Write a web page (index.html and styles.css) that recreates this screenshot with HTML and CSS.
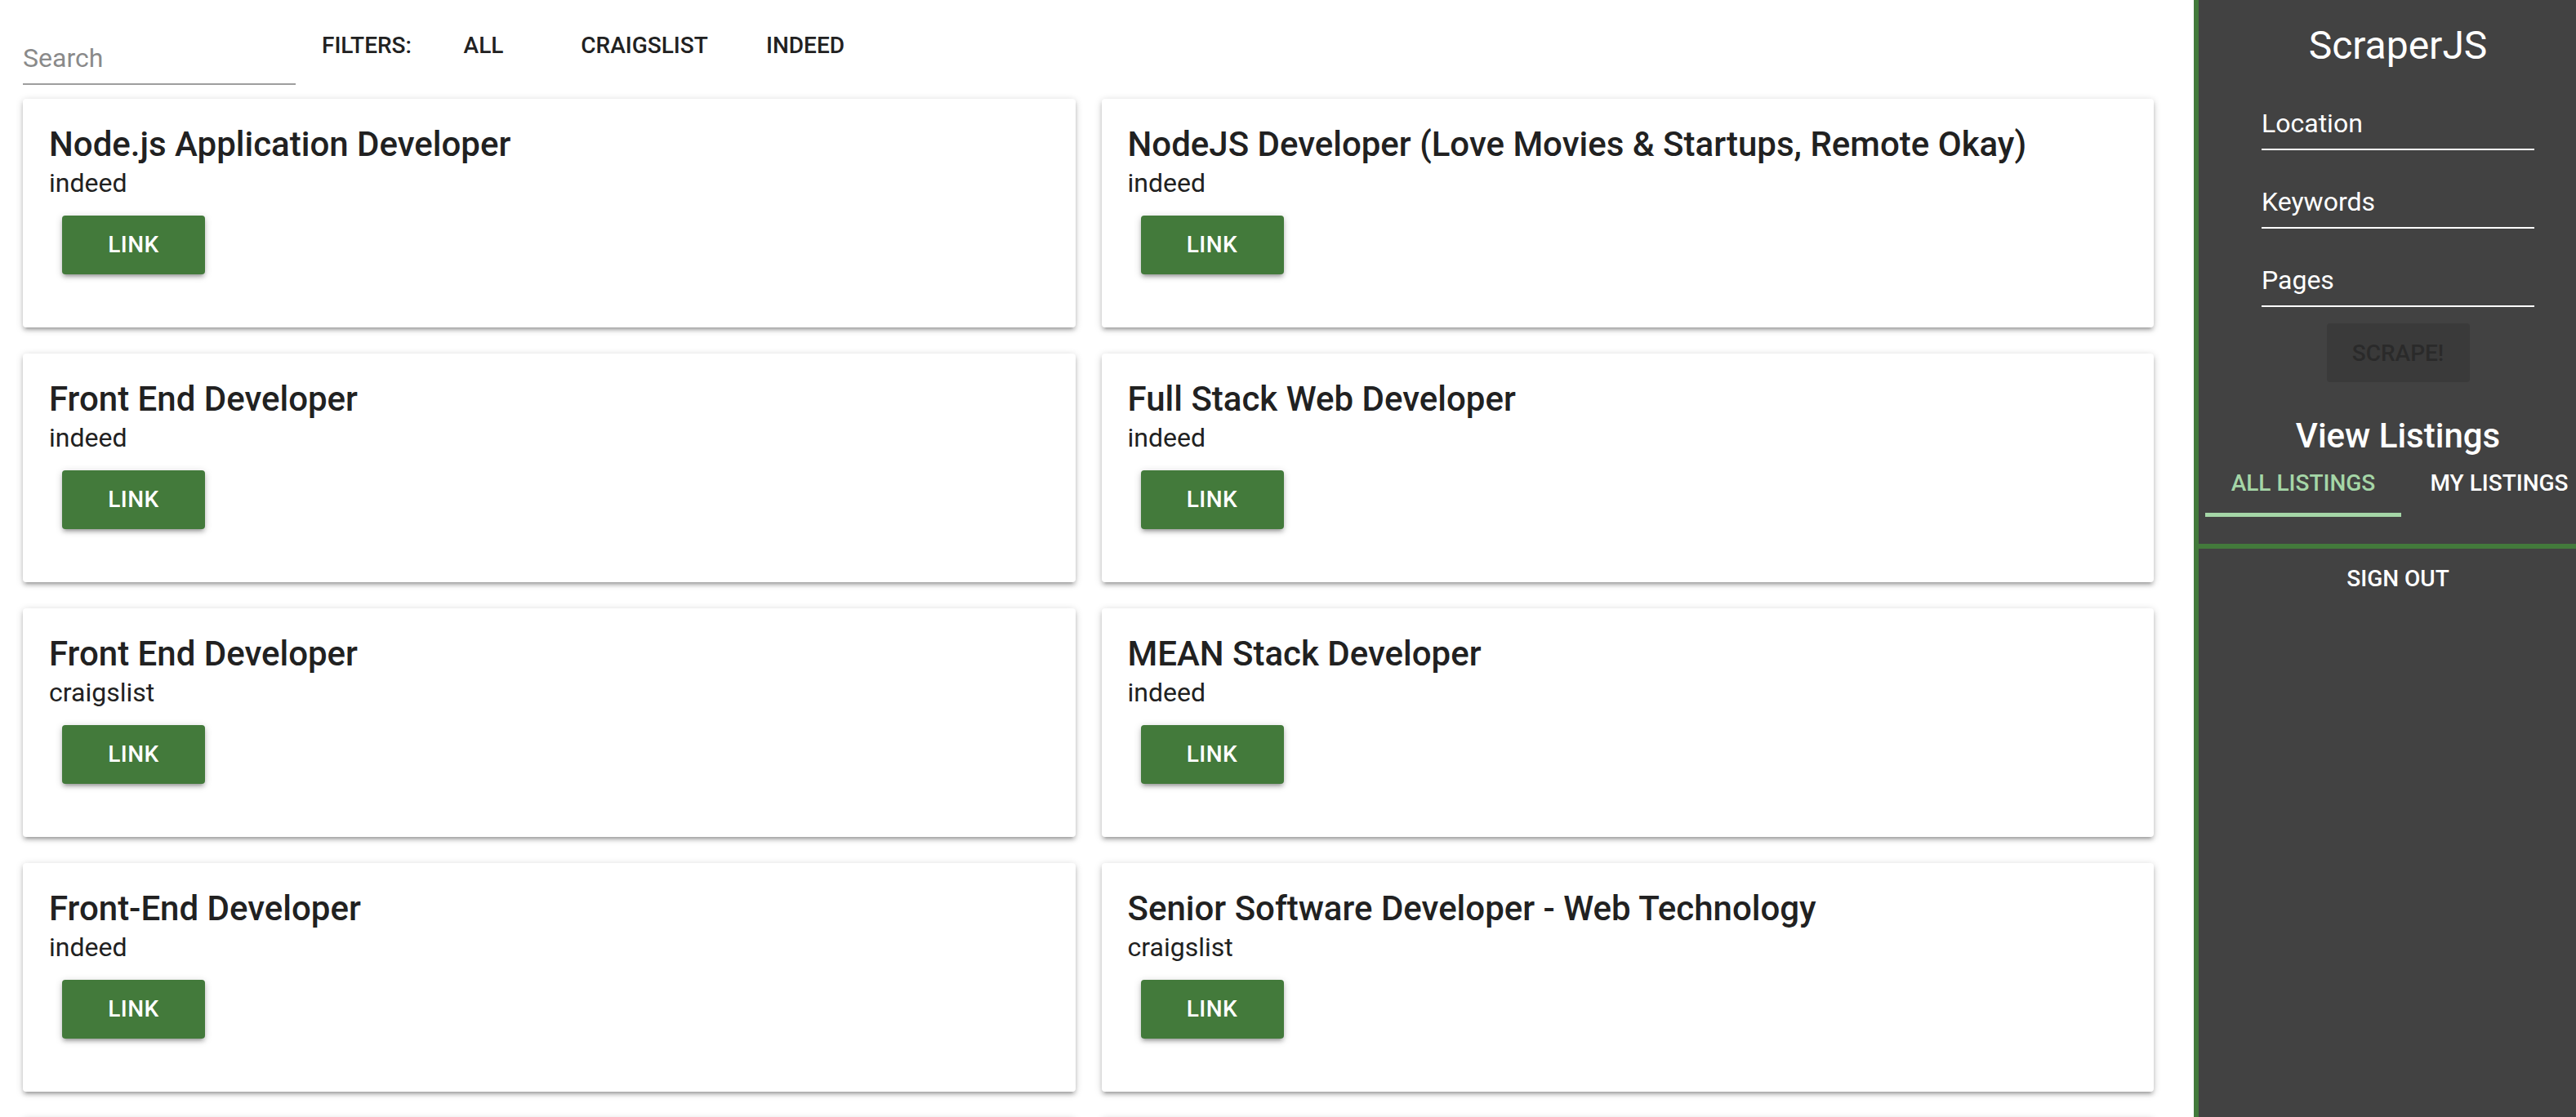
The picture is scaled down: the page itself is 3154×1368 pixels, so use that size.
FILE: index.html
```html
<!DOCTYPE html>
<html lang="en">
<head>
<meta charset="utf-8">
<title>ScraperJS</title>
<link rel="stylesheet" href="styles.css">
</head>
<body>
<div class="app">
  <main class="main">
    <div class="toolbar">
      <input class="search" type="text" placeholder="Search">
      <div class="filters">
        <span class="filter-label">FILTERS:</span>
        <button class="filter-btn">ALL</button>
        <button class="filter-btn">CRAIGSLIST</button>
        <button class="filter-btn">INDEED</button>
      </div>
    </div>
    <div class="grid">
      <div class="card">
        <div class="card-title">Node.js Application Developer</div>
        <p class="card-source">indeed</p>
        <a class="btn-link">LINK</a>
      </div>
      <div class="card">
        <div class="card-title">NodeJS Developer (Love Movies &amp; Startups, Remote Okay)</div>
        <p class="card-source">indeed</p>
        <a class="btn-link">LINK</a>
      </div>
      <div class="card">
        <div class="card-title">Front End Developer</div>
        <p class="card-source">indeed</p>
        <a class="btn-link">LINK</a>
      </div>
      <div class="card">
        <div class="card-title">Full Stack Web Developer</div>
        <p class="card-source">indeed</p>
        <a class="btn-link">LINK</a>
      </div>
      <div class="card">
        <div class="card-title">Front End Developer</div>
        <p class="card-source">craigslist</p>
        <a class="btn-link">LINK</a>
      </div>
      <div class="card">
        <div class="card-title">MEAN Stack Developer</div>
        <p class="card-source">indeed</p>
        <a class="btn-link">LINK</a>
      </div>
      <div class="card">
        <div class="card-title">Front-End Developer</div>
        <p class="card-source">indeed</p>
        <a class="btn-link">LINK</a>
      </div>
      <div class="card">
        <div class="card-title">Senior Software Developer - Web Technology</div>
        <p class="card-source">craigslist</p>
        <a class="btn-link">LINK</a>
      </div>
      <div class="card card-empty"></div>
      <div class="card card-empty"></div>
    </div>
  </main>
  <aside class="side">
    <div class="side-inner">
      <h1 class="brand">ScraperJS</h1>
      <div class="field">Location</div>
      <div class="field">Keywords</div>
      <div class="field">Pages</div>
      <div class="scrape-row"><button class="btn-scrape" disabled>SCRAPE!</button></div>
      <h2 class="view-title">View Listings</h2>
      <div class="tabs">
        <a class="tab active">ALL LISTINGS</a>
        <a class="tab">MY LISTINGS</a>
      </div>
      <div class="divider"></div>
      <a class="signout">SIGN OUT</a>
    </div>
  </aside>
</div>
</body>
</html>
```
FILE: styles.css
```css
html, body {
  margin: 0;
  padding: 0;
  height: 100%;
  overflow: hidden;
}
body {
  font-family: Roboto, "Noto Sans", sans-serif;
  color: rgba(0, 0, 0, 0.87);
  background: #fff;
}
.app {
  display: flex;
  height: 100vh;
}
.main {
  width: 2686px;
  flex: none;
  box-sizing: border-box;
  padding: 0 49px 0 28px;
}
.toolbar {
  display: flex;
  align-items: flex-start;
  height: 121px;
}
.search {
  margin-top: 40px;
  width: 334px;
  height: 62px;
  box-sizing: content-box;
  padding: 0;
  border: none;
  border-bottom: 2px solid #9e9e9e;
  outline: none;
  font-family: Roboto, sans-serif;
  font-size: 32px;
  color: #212121;
  background: transparent;
}
.search::placeholder {
  color: #8a8a8a;
}
.filters {
  display: flex;
  align-items: center;
  margin-left: 32px;
  margin-top: 36px;
  height: 40px;
}
.filter-label {
  width: 108px;
  font-size: 28px;
  font-weight: 500;
  line-height: 40px;
  color: #212121;
}
.filter-btn {
  width: 180px;
  height: 40px;
  padding: 0;
  border: none;
  background: transparent;
  font-family: Roboto, sans-serif;
  font-size: 28px;
  font-weight: 500;
  line-height: 40px;
  color: #212121;
  text-align: center;
}
.filter-btn + .filter-btn {
  margin-left: 17px;
}
.grid {
  display: grid;
  grid-template-columns: 1fr 1fr;
  column-gap: 32px;
  row-gap: 32px;
}
.card {
  background: #fff;
  border-radius: 4px;
  box-shadow: 0 4px 4px 0 rgba(0, 0, 0, 0.14), 0 6px 2px -4px rgba(0, 0, 0, 0.12), 0 2px 10px 0 rgba(0, 0, 0, 0.2);
  padding: 32px 32px 33px;
  height: 280px;
  box-sizing: border-box;
}
.card-title {
  font-size: 42px;
  font-weight: 500;
  line-height: 48px;
  color: #212121;
}
.card-source {
  margin: 0;
  font-size: 32px;
  line-height: 46px;
  color: #212121;
}
.btn-link {
  display: block;
  margin: 17px 0 0 16px;
  width: 175px;
  height: 72px;
  border-radius: 4px;
  background: #437a3b;
  color: #fff;
  font-size: 28px;
  font-weight: 500;
  line-height: 72px;
  text-align: center;
  letter-spacing: 0.5px;
  box-shadow: 0 4px 4px 0 rgba(0, 0, 0, 0.14), 0 6px 2px -4px rgba(0, 0, 0, 0.12), 0 2px 10px 0 rgba(0, 0, 0, 0.2);
}
.side {
  width: 468px;
  flex: none;
  box-sizing: border-box;
  height: 100vh;
  background: #424242;
  border-left: 6px solid #437a3b;
  overflow: hidden;
}
.side-inner {
  width: 488px;
  color: #fff;
}
.brand {
  margin: 0;
  padding-top: 24px;
  font-size: 48px;
  font-weight: 400;
  line-height: 64px;
  text-align: center;
}
.field {
  margin: 32px auto 0;
  width: 334px;
  font-size: 32px;
  line-height: 62px;
  border-bottom: 2px solid #fff;
}
.scrape-row {
  display: flex;
  justify-content: center;
  margin-top: 20px;
}
.btn-scrape {
  width: 175px;
  height: 72px;
  border: none;
  border-radius: 4px;
  background: #3a3a3a;
  color: #2a2a2a;
  font-family: Roboto, sans-serif;
  font-size: 28px;
  font-weight: 500;
  padding: 0;
}
.view-title {
  margin: 44px 0 0;
  font-size: 42px;
  font-weight: 500;
  line-height: 44px;
  text-align: center;
}
.tabs {
  display: flex;
  padding-left: 8px;
}
.tab {
  flex: none;
  width: 240px;
  height: 77px;
  box-sizing: border-box;
  line-height: 72px;
  text-align: center;
  font-size: 28px;
  font-weight: 500;
  color: #fff;
  border-bottom: 5px solid transparent;
}
.tab.active {
  color: #a5d6a7;
  border-bottom-color: #a5d6a7;
}
.divider {
  margin-top: 33px;
  height: 6px;
  background: #437a3b;
}
.signout {
  display: block;
  font-size: 28px;
  font-weight: 500;
  line-height: 73px;
  text-align: center;
}
```
